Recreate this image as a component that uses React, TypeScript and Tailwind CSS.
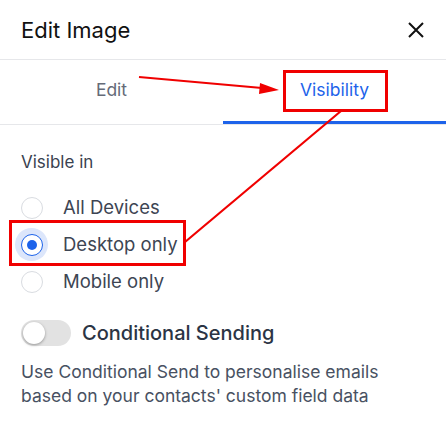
import React, { useState } from 'react';

type Option = { id: string; label: string };

const options: Option[] = [
  { id: 'all', label: 'All Devices' },
  { id: 'desktop', label: 'Desktop only' },
  { id: 'mobile', label: 'Mobile only' },
];

const Radio = ({ checked }: { checked: boolean }) =>
  checked ? (
    <span className="flex items-center justify-center w-[33px] h-[33px] rounded-full bg-[#dce6fb]">
      <span className="flex items-center justify-center w-[22px] h-[22px] rounded-full bg-white border border-[#1d63ea]">
        <span className="w-[10px] h-[10px] rounded-full bg-[#1d63ea]"></span>
      </span>
    </span>
  ) : (
    <span className="flex items-center justify-center w-[33px] h-[33px]">
      <span className="w-[22px] h-[22px] rounded-full bg-white border border-[#d9dce1]"></span>
    </span>
  );

// red markup drawn over the panel
const Annotations = () => (
  <div className="absolute inset-0 pointer-events-none">
    <div className="absolute left-[283px] top-[70px] w-[105px] h-[42px] border-[3px] border-[#f00000]"></div>
    <div className="absolute left-[9px] top-[220px] w-[177px] h-[46px] border-[3px] border-[#f00000]"></div>
    <svg className="absolute inset-0" width="446" height="421" viewBox="0 0 446 421">
      <line x1="139" y1="77" x2="262" y2="88" stroke="#f00000" strokeWidth="2.2" />
      <polygon points="279,90 260,83 259,94" fill="#f00000" />
      <line x1="341" y1="111" x2="185" y2="242" stroke="#f00000" strokeWidth="2.2" />
    </svg>
  </div>
);

export default function App() {
  const [tab, setTab] = useState<'edit' | 'visibility'>('visibility');
  const [visible, setVisible] = useState('desktop');
  const [conditional, setConditional] = useState(false);

  return (
    <div className="relative w-[446px] h-[421px] bg-white overflow-hidden" style={{ fontFamily: 'Inter, "Noto Sans", sans-serif' }}>
      <div className="h-[60px] flex items-center justify-between pl-[21px] pr-[22px] border-b border-[#e6e7ea]">
        <span className="text-[22px] text-[#111] leading-none">Edit Image</span>
        <svg width="16" height="16" viewBox="0 0 16 16" className="text-[#111]">
          <path d="M1 1L15 15M15 1L1 15" stroke="currentColor" strokeWidth="2" />
        </svg>
      </div>

      <div className="grid grid-cols-2 h-[65px] border-b border-[#e6e7ea]">
        <button onClick={() => setTab('edit')} className={`flex items-center justify-center text-[17.5px] ${tab === 'edit' ? 'text-[#1d63ea] border-b-[3px] border-[#1d63ea]' : 'text-[#656b78] pb-[3px]'}`}>
          Edit
        </button>
        <button onClick={() => setTab('visibility')} className={`flex items-center justify-center text-[17.5px] ${tab === 'visibility' ? 'text-[#1d63ea] border-b-[3px] border-[#1d63ea]' : 'text-[#656b78] pb-[3px]'}`}>
          Visibility
        </button>
      </div>

      <div className="px-[21px] pt-[25px]">
        <div className="text-[17px] leading-[24px] text-[#3a4250]">Visible in</div>
        <div className="mt-[15px] flex flex-col">
          {options.map(o => (
            <button key={o.id} onClick={() => setVisible(o.id)} className="h-[37px] flex items-center -ml-[6px] gap-[15px]">
              <Radio checked={visible === o.id} />
              <span className="text-[18.5px] text-[#3d4553]">{o.label}</span>
            </button>
          ))}
        </div>

        <div className="mt-[18px] flex items-center gap-[11px]">
          <button onClick={() => setConditional(!conditional)} className={`w-[50px] h-[26px] rounded-full p-[2px] flex ${conditional ? 'bg-[#1d63ea] justify-end' : 'bg-[#e2e2e2] justify-start'}`}>
            <span className="w-[22px] h-[22px] rounded-full bg-white shadow-[0_1px_3px_rgba(0,0,0,0.35)]"></span>
          </button>
          <span className="text-[20px] font-medium text-[#2b3444]">Conditional Sending</span>
        </div>

        <p className="mt-[12px] text-[17.5px] leading-[24px] text-[#485162]">
          Use Conditional Send to personalise emails based on your contacts' custom field data
        </p>
      </div>

      <Annotations />
    </div>
  );
}
